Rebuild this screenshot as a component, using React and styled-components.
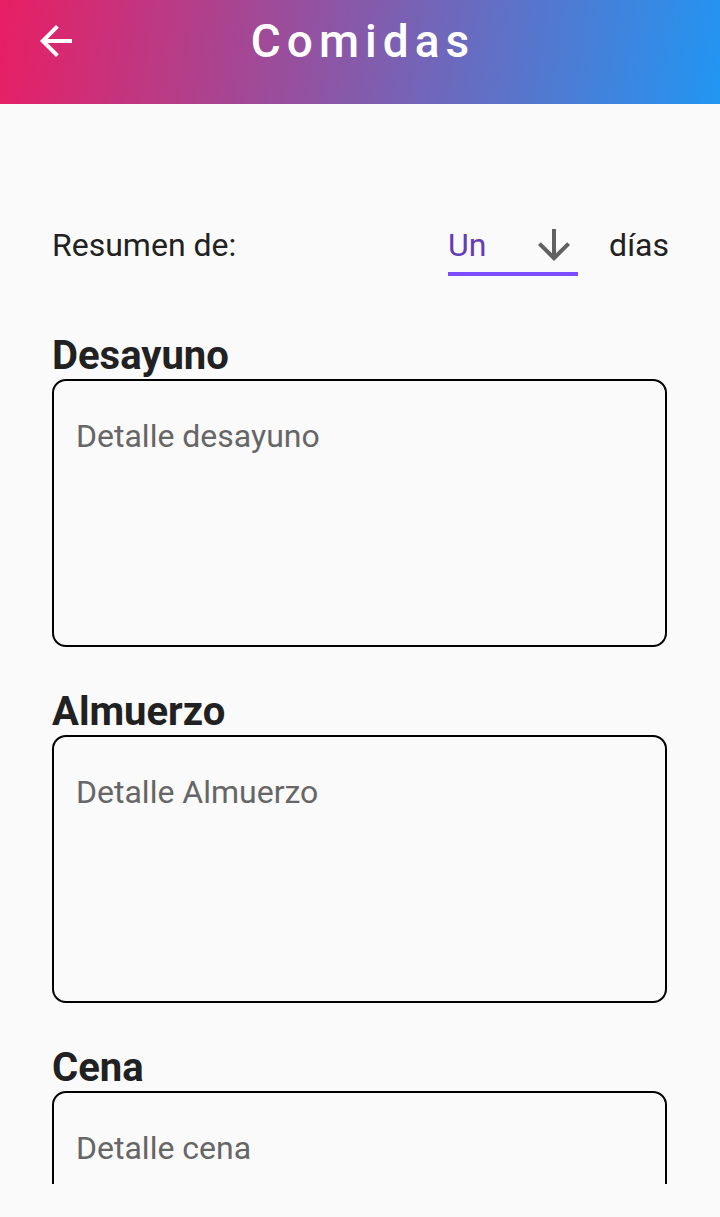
import React from "react";
import styled, { createGlobalStyle } from "styled-components";

const GlobalStyle = createGlobalStyle`
  html, body {
    margin: 0;
    padding: 0;
    background: #fafafa;
    font-family: Roboto, "Noto Sans", "Liberation Sans", sans-serif;
  }
  * {
    box-sizing: border-box;
  }
`;

const meals = [
  { title: "Desayuno", hint: "Detalle desayuno" },
  { title: "Almuerzo", hint: "Detalle Almuerzo" },
  { title: "Cena", hint: "Detalle cena" },
];

function App() {
  return (
    <>
      <GlobalStyle />
      <Page>
        {/* APP BAR */}
        <AppBar>
          <BackButton aria-label="Volver">
            <svg width={48} height={48} viewBox="0 0 24 24" fill="#ffffff">
              <path d="M20 11H7.83l5.59-5.59L12 4l-8 8 8 8 1.41-1.41L7.83 13H20v-2z" />
            </svg>
          </BackButton>
          <Title>Comidas</Title>
          <span />
        </AppBar>

        {/* BODY */}
        <Body>
          <SummaryRow>
            <Label>Resumen de:</Label>
            <SummaryControls>
              <Dropdown>
                <DropdownValue>
                  <span>Un</span>
                  <svg width={48} height={48} viewBox="0 0 24 24" fill="#616161">
                    <path d="M20 12l-1.41-1.41L13 16.17V4h-2v12.17l-5.58-5.59L4 12l8 8 8-8z" />
                  </svg>
                </DropdownValue>
                <Underline />
              </Dropdown>
              <Label $gap>días</Label>
            </SummaryControls>
          </SummaryRow>

          {meals.map((meal, i) => (
            <MealSection key={meal.title} $first={i === 0}>
              <MealTitle>{meal.title}</MealTitle>
              <MealInput placeholder={meal.hint} />
            </MealSection>
          ))}
        </Body>
        <Footer />
      </Page>
    </>
  );
}

export default App;

const Page = styled.div`
  display: flex;
  flex-direction: column;
  height: 100vh;
  overflow: hidden;
  background: #fafafa;
`;

const AppBar = styled.header`
  flex-shrink: 0;
  height: 104px;
  display: grid;
  grid-template-columns: 80px 1fr 80px;
  align-items: start;
  background: linear-gradient(98deg, #e91e63 0%, #2196f3 100%);
`;

const BackButton = styled.div`
  display: flex;
  padding: 17px 0 0 32px;

  svg {
    display: block;
  }
`;

const Title = styled.h1`
  margin: 15px 0 0;
  padding-left: 6px;
  color: #ffffff;
  font-size: 46px;
  font-weight: 500;
  line-height: 52px;
  letter-spacing: 6px;
  text-align: center;
`;

const Body = styled.main`
  flex-shrink: 0;
  height: 1080px;
  overflow: hidden;
  padding: 117px 53px 0 52px;
`;

const SummaryRow = styled.div`
  display: flex;
  align-items: flex-start;
  justify-content: space-between;
  margin-right: -2px;
`;

const SummaryControls = styled.div`
  display: flex;
  align-items: flex-start;
`;

const Label = styled.span`
  color: #212121;
  font-size: 32px;
  line-height: 48px;
  margin-left: ${(p) => (p.$gap ? "31px" : "0")};
`;

const Dropdown = styled.div`
  width: 130px;
  display: flex;
  flex-direction: column;
`;

const DropdownValue = styled.div`
  height: 48px;
  display: flex;
  align-items: center;
  justify-content: space-between;
  color: #673ab7;
  font-size: 32px;

  svg {
    display: block;
  }
`;

const Underline = styled.div`
  margin-top: 3px;
  height: 4px;
  background: #7c4dff;
`;

const MealSection = styled.section`
  margin-top: ${(p) => (p.$first ? "59px" : "44px")};
`;

const MealTitle = styled.h2`
  margin: 0 0 2px;
  color: #212121;
  font-size: 40px;
  font-weight: 700;
  line-height: 42px;
`;

const MealInput = styled.textarea`
  display: block;
  width: 100%;
  height: 268px;
  margin: 0;
  padding: 36px 22px;
  border: 2px solid #000000;
  border-radius: 14px;
  background: transparent;
  resize: none;
  outline: none;
  color: #212121;
  font-family: Roboto, "Noto Sans", sans-serif;
  font-size: 32px;
  line-height: 38px;

  &::placeholder {
    color: #666666;
  }
`;

const Footer = styled.div`
  flex: 1;
`;
